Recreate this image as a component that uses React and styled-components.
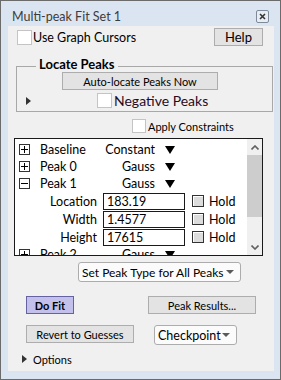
import React from "react";
import styled, { createGlobalStyle } from "styled-components";

const GlobalStyle = createGlobalStyle`
  html, body {
    margin: 0;
    padding: 0;
    background: #ffffff;
  }
`;

const FONT = `Lato, "Open Sans", "Liberation Sans", sans-serif`;

const Window = styled.div`
  width: 281px;
  height: 380px;
  box-sizing: border-box;
  border: 1px solid #6b6b6b;
  background: #dbe5f1;
  display: flex;
  flex-direction: column;
  font-family: ${FONT};
  color: #000;
`;

const TitleBar = styled.div`
  height: 25px;
  box-sizing: border-box;
  padding: 5px 11px 0 11px;
  display: flex;
  align-items: center;
  justify-content: space-between;
`;

const Title = styled.span`
  font-size: 12.5px;
  color: #3c3c3c;
`;

const CloseBox = styled.div`
  width: 13px;
  height: 13px;
  box-sizing: border-box;
  border: 1px solid #7d8a99;
  border-radius: 2px;
  background: #e8edf3;
  display: flex;
  align-items: center;
  justify-content: center;
`;

const Panel = styled.div`
  flex: 1;
  margin: 0 6px 8px 7px;
  background: #f0f0f0;
  display: flex;
  flex-direction: column;
`;

const Row = styled.div`
  display: flex;
  align-items: ${p => p.align || "center"};
  height: ${p => p.h || 18}px;
  margin-top: ${p => p.mt || 0}px;
  padding-left: ${p => p.pl || 0}px;
  padding-right: ${p => p.pr || 0}px;
`;

const Box = styled.span`
  display: inline-block;
  box-sizing: border-box;
  width: ${p => p.size || 15}px;
  height: ${p => p.size || 15}px;
  margin-left: ${p => p.ml || 0}px;
  border: 1px solid #c4c4c4;
  background: #fff;
  flex: none;
`;

const Label = styled.span`
  font-size: ${p => p.fs || 11}px;
  font-weight: ${p => (p.bold ? 700 : 400)};
  color: ${p => p.color || "#000"};
  margin-left: ${p => p.ml || 0}px;
  white-space: nowrap;
`;

const Button = styled.div`
  box-sizing: border-box;
  width: ${p => p.w}px;
  height: ${p => p.h || 18}px;
  margin-left: ${p => p.ml || 0}px;
  border: 1px solid ${p => (p.primary ? "#6462a0" : "#adadad")};
  background: ${p => (p.primary ? "#c4c0ec" : "#e3e3e3")};
  display: flex;
  align-items: center;
  justify-content: center;
  font-size: ${p => p.fs || 11}px;
  font-weight: ${p => (p.primary ? 700 : 400)};
  white-space: nowrap;
  flex: none;
`;

const Spacer = styled.div`
  flex: 1;
`;

const Group = styled.div`
  position: relative;
  box-sizing: border-box;
  width: 257px;
  margin: 20px 0 0 8px;
  border: 1px solid #a8a8a8;
  padding: 5px 0 3px 0;
`;

const Legend = styled.span`
  position: absolute;
  top: -11px;
  left: 19px;
  padding: 0 3px;
  background: #f0f0f0;
  font-size: 13px;
  font-weight: 700;
`;

const Arrow = styled.span`
  display: inline-block;
  width: 0;
  height: 0;
  border-top: 4px solid transparent;
  border-bottom: 4px solid transparent;
  border-left: 5px solid #333;
  flex: none;
`;

const List = styled.div`
  box-sizing: border-box;
  width: 249px;
  height: 118px;
  margin: 5px 0 0 6px;
  border: 1px solid #1a1a1a;
  background: #fff;
  display: flex;
  overflow: hidden;
  flex: none;
`;

const ListBody = styled.div`
  flex: 1;
  padding-top: 2px;
  overflow: hidden;
  font-size: 12.5px;
`;

const TreeRow = styled.div`
  display: flex;
  align-items: center;
  height: ${p => p.h || 17}px;
  padding-left: 4px;
`;

const Expander = styled.span`
  position: relative;
  box-sizing: border-box;
  width: 11px;
  height: 11px;
  border: 1px solid #333;
  flex: none;
  &::before {
    content: "";
    position: absolute;
    left: 1px;
    right: 1px;
    top: 4px;
    height: 1px;
    background: #000;
  }
  &::after {
    content: "";
    display: ${p => (p.open ? "none" : "block")};
    position: absolute;
    top: 1px;
    bottom: 1px;
    left: 4px;
    width: 1px;
    background: #000;
  }
`;

const NodeName = styled.span`
  width: 60px;
  margin-left: 10px;
`;

const NodeType = styled.span`
  width: 55px;
  text-align: right;
`;

const DownTri = styled.span`
  display: inline-block;
  width: 0;
  height: 0;
  border-left: 5px solid transparent;
  border-right: 5px solid transparent;
  border-top: 8px solid #000;
  margin-left: 10px;
  flex: none;
`;

const ParamName = styled.span`
  width: 78px;
  text-align: right;
`;

const Field = styled.span`
  box-sizing: border-box;
  width: 82px;
  height: 17px;
  margin-left: 6px;
  border: 1px solid #1a1a1a;
  padding-left: 3px;
  display: flex;
  align-items: center;
`;

const HoldBox = styled.span`
  box-sizing: border-box;
  width: 12px;
  height: 12px;
  margin-left: 7px;
  border: 1px solid #333;
  background: #dcdcdc;
  box-shadow: inset 1px 1px 0 #fff;
  flex: none;
`;

const Scrollbar = styled.div`
  width: 15px;
  background: #f0f0f0;
  display: flex;
  flex-direction: column;
  align-items: center;
  flex: none;
`;

const ScrollBtn = styled.div`
  height: 16px;
  display: flex;
  align-items: center;
  justify-content: center;
  width: 100%;
`;

const Thumb = styled.div`
  width: 100%;
  height: 62px;
  background: #cdcdcd;
`;

const Popup = styled.div`
  box-sizing: border-box;
  width: ${p => p.w}px;
  height: 20px;
  margin-left: ${p => p.ml || 0}px;
  border: 1px solid #acacac;
  border-radius: 3px;
  background: #fbfbfb;
  display: flex;
  align-items: center;
  padding: 0 6px 0 3px;
  font-size: ${p => p.fs || 13}px;
  white-space: nowrap;
  flex: none;
`;

const SmallTri = styled.span`
  display: inline-block;
  width: 0;
  height: 0;
  border-left: 4px solid transparent;
  border-right: 4px solid transparent;
  border-top: 4px solid #5a5a5a;
  margin-left: auto;
  flex: none;
`;

const Chevron = ({ up }) => (
  <svg width="8" height="5" viewBox="0 0 8 5">
    <path
      d={up ? "M0.5 4.5 L4 1 L7.5 4.5" : "M0.5 0.5 L4 4 L7.5 0.5"}
      fill="none"
      stroke="#606060"
      strokeWidth="1.6"
    />
  </svg>
);

const nodes = [
  { name: "Baseline", type: "Constant", open: false },
  { name: "Peak 0", type: "Gauss", open: false },
  { name: "Peak 1", type: "Gauss", open: true }
];

const params = [
  { name: "Location", value: "183.19" },
  { name: "Width", value: "1.4577" },
  { name: "Height", value: "17615" }
];

const Node = ({ node }) => (
  <TreeRow>
    <Expander open={node.open} />
    <NodeName>{node.name}</NodeName>
    <NodeType>{node.type}</NodeType>
    <DownTri />
  </TreeRow>
);

export default function App() {
  return (
    <>
      <GlobalStyle />
      <Window>
        <TitleBar>
          <Title>Multi-peak Fit Set 1</Title>
          <CloseBox>
            <svg width="7" height="7" viewBox="0 0 7 7">
              <path d="M1 1 L6 6 M6 1 L1 6" stroke="#333" strokeWidth="1.6" />
            </svg>
          </CloseBox>
        </TitleBar>
        <Panel>
          <Row mt={2} pl={9} pr={11}>
            <Box size={15} />
            <Label fs={12.5} ml={1}>Use Graph Cursors</Label>
            <Spacer />
            <Button w={49} fs={13}>Help</Button>
          </Row>

          <Group>
            <Legend>Locate Peaks</Legend>
            <Row pl={45}>
              <Button w={156}>Auto-locate Peaks Now</Button>
            </Row>
            <Row mt={3} h={15} pl={9}>
              <Arrow />
              <Box size={15} ml={66} />
              <Label fs={14} ml={2} color="#2a0a1c">Negative Peaks</Label>
            </Row>
          </Group>

          <Row mt={7} h={14} pl={124}>
            <Box size={14} />
            <Label ml={2}>Apply Constraints</Label>
          </Row>

          <List>
            <ListBody>
              {nodes.map(n => (
                <Node key={n.name} node={n} />
              ))}
              {params.map(p => (
                <TreeRow key={p.name} h={18}>
                  <ParamName>{p.name}</ParamName>
                  <Field>{p.value}</Field>
                  <HoldBox />
                  <Label fs={12.5} ml={5}>Hold</Label>
                </TreeRow>
              ))}
              <Node node={{ name: "Peak 2", type: "Gauss", open: false }} />
            </ListBody>
            <Scrollbar>
              <ScrollBtn>
                <Chevron up />
              </ScrollBtn>
              <Thumb />
              <Spacer />
              <ScrollBtn>
                <Chevron />
              </ScrollBtn>
            </Scrollbar>
          </List>

          <Row mt={6} h={20}>
            <Popup w={163} ml={70} fs={12}>
              Set Peak Type for All Peaks
              <SmallTri />
            </Popup>
          </Row>

          <Row mt={14} pl={18}>
            <Button w={48} primary>Do Fit</Button>
            <Button w={108} ml={74}>Peak Results...</Button>
          </Row>

          <Row mt={11} h={20} pl={18} align="flex-start">
            <Button w={108}>Revert to Guesses</Button>
            <Popup w={83} ml={20} fs={12.5}>
              Checkpoint
              <SmallTri />
            </Popup>
          </Row>

          <Row mt={7} h={14} pl={14}>
            <Arrow />
            <Label ml={6}>Options</Label>
          </Row>
        </Panel>
      </Window>
    </>
  );
}
